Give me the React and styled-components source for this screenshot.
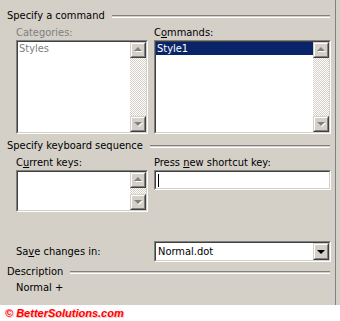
import React from "react";
import styled, { createGlobalStyle } from "styled-components";

const Global = createGlobalStyle`
  html, body { margin: 0; padding: 0; background: #ffffff; }
  body { font-family: "DejaVu Sans Condensed", "DejaVu Sans", sans-serif; font-size: 11px; color: #000; }
`;

const Page = styled.div`
  width: 340px;
  height: 321px;
  display: flex;
  flex-direction: column;
  overflow: hidden;
`;

const Dialog = styled.div`
  height: 305px;
  background: #d4d0c8;
  display: flex;
`;

const Content = styled.div`
  width: 336px;
  border-right: 1px solid #808080;
  display: flex;
  flex-direction: column;
  padding: 9px 0 0 7px;
  box-sizing: border-box;
`;

const GroupHeader = styled.div`
  display: flex;
  align-items: center;
  height: 13px;
  line-height: 13px;
  margin-top: ${(p) => p.$mt || 0}px;
  margin-right: 5px;
  gap: 7px;
`;

const Etched = styled.div`
  flex: 1;
  height: 1px;
  border-top: 1px solid #808080;
  border-bottom: 1px solid #ffffff;
  margin-top: 1px;
`;

const Columns = styled.div`
  display: grid;
  grid-template-columns: 132px 177px;
  column-gap: 6px;
  padding-left: 9px;
  margin-top: ${(p) => p.$mt || 0}px;
`;

const Field = styled.div`
  display: flex;
  flex-direction: column;
`;

const Label = styled.div`
  height: 13px;
  line-height: 13px;
  margin-bottom: ${(p) => p.$mb ?? 1}px;
  color: ${(p) => (p.$disabled ? "#808080" : "#000")};
  white-space: nowrap;
`;

const U = styled.span`
  text-decoration: underline;
`;

const SunkenOuter = styled.div`
  border: 1px solid;
  border-color: #808080 #ffffff #ffffff #808080;
  height: ${(p) => p.$h}px;
  box-sizing: border-box;
  display: flex;
`;

const SunkenInner = styled.div`
  flex: 1;
  border: 1px solid;
  border-color: #404040 #d4d0c8 #d4d0c8 #404040;
  background: #ffffff;
  display: flex;
  min-width: 0;
`;

const ListBody = styled.div`
  flex: 1;
  display: flex;
  flex-direction: column;
  min-width: 0;
`;

const Item = styled.div`
  height: 13px;
  line-height: 13px;
  padding-left: 1px;
  color: ${(p) => (p.$selected ? "#ffffff" : p.$disabled ? "#808080" : "#000")};
  background: ${(p) => (p.$selected ? "#0a246a" : "transparent")};
`;

const ScrollBar = styled.div`
  width: 16px;
  display: flex;
  flex-direction: column;
`;

const Track = styled.div`
  flex: 1;
  background: repeating-conic-gradient(#ffffff 0 25%, #d4d0c8 0 50%) 0 0 / 2px 2px;
`;

const BtnOuter = styled.div`
  width: 16px;
  height: ${(p) => (p.$fill ? "auto" : "16px")};
  flex: ${(p) => (p.$fill ? 1 : "none")};
  box-sizing: border-box;
  border: 1px solid;
  border-color: #d4d0c8 #404040 #404040 #d4d0c8;
  display: flex;
`;

const BtnInner = styled.div`
  flex: 1;
  border: 1px solid;
  border-color: #ffffff #808080 #808080 #ffffff;
  background: #d4d0c8;
  display: flex;
  align-items: center;
  justify-content: center;
`;

const Arrow = ({ up, disabled }) => (
  <svg width="9" height="6" viewBox="0 0 9 6">
    {disabled && (
      <polygon
        points={up ? "5,1 9,5 1,5" : "1,2 9,2 5,6"}
        fill="#ffffff"
      />
    )}
    <polygon
      points={up ? "4,0 8,4 0,4" : "0,1 8,1 4,5"}
      fill={disabled ? "#808080" : "#000000"}
    />
  </svg>
);

const ScrollButton = ({ up, disabled, fill }) => (
  <BtnOuter $fill={fill}>
    <BtnInner>
      <Arrow up={up} disabled={disabled} />
    </BtnInner>
  </BtnOuter>
);

const VScroll = () => (
  <ScrollBar>
    <ScrollButton up disabled />
    <Track />
    <ScrollButton disabled />
  </ScrollBar>
);

const TextInput = styled.div`
  flex: 1;
  display: flex;
  align-items: center;
  padding-left: 2px;
`;

const Caret = styled.div`
  width: 1px;
  height: 13px;
  background: #000;
`;

const SaveRow = styled.div`
  display: grid;
  grid-template-columns: 132px 177px;
  column-gap: 6px;
  padding-left: 9px;
  align-items: center;
  margin-top: 29px;
`;

const ComboText = styled.div`
  flex: 1;
  line-height: 17px;
  padding-left: 2px;
`;

const DescText = styled.div`
  padding-left: 9px;
  margin-top: 3px;
  height: 13px;
  line-height: 13px;
`;

const Watermark = styled.div`
  height: 16px;
  line-height: 16px;
  padding-left: 5px;
  font-family: "Liberation Sans", Arial, sans-serif;
  font-weight: bold;
  font-style: italic;
  font-size: 11px;
  color: #ff0000;
  text-shadow: 1px 1px 0 #ffc0c0;
`;

export default function App() {
  return (
    <Page>
      <Global />
      <Dialog>
        <Content>
          <GroupHeader>
            <span>Specify a command</span>
            <Etched />
          </GroupHeader>
          <Columns $mt={4}>
            <Field>
              <Label $disabled>Categories:</Label>
              <SunkenOuter $h={94}>
                <SunkenInner>
                  <ListBody>
                    <Item $disabled>Styles</Item>
                  </ListBody>
                  <VScroll />
                </SunkenInner>
              </SunkenOuter>
            </Field>
            <Field>
              <Label>
                C<U>o</U>mmands:
              </Label>
              <SunkenOuter $h={94}>
                <SunkenInner>
                  <ListBody>
                    <Item $selected>Style1</Item>
                  </ListBody>
                  <VScroll />
                </SunkenInner>
              </SunkenOuter>
            </Field>
          </Columns>
          <GroupHeader $mt={5}>
            <span>Specify keyboard sequence</span>
            <Etched />
          </GroupHeader>
          <Columns $mt={4}>
            <Field>
              <Label>
                C<U>u</U>rrent keys:
              </Label>
              <SunkenOuter $h={42}>
                <SunkenInner>
                  <ListBody />
                  <VScroll />
                </SunkenInner>
              </SunkenOuter>
            </Field>
            <Field>
              <Label>
                Press <U>n</U>ew shortcut key:
              </Label>
              <SunkenOuter $h={20}>
                <SunkenInner>
                  <TextInput>
                    <Caret />
                  </TextInput>
                </SunkenInner>
              </SunkenOuter>
            </Field>
          </Columns>
          <SaveRow>
            <Label $mb={0}>
              Sa<U>v</U>e changes in:
            </Label>
            <SunkenOuter $h={21}>
              <SunkenInner>
                <ComboText>Normal.dot</ComboText>
                <ScrollBar>
                  <ScrollButton fill />
                </ScrollBar>
              </SunkenInner>
            </SunkenOuter>
          </SaveRow>
          <GroupHeader $mt={3}>
            <span>Description</span>
            <Etched />
          </GroupHeader>
          <DescText>Normal +</DescText>
        </Content>
      </Dialog>
      <Watermark>© BetterSolutions.com</Watermark>
    </Page>
  );
}
